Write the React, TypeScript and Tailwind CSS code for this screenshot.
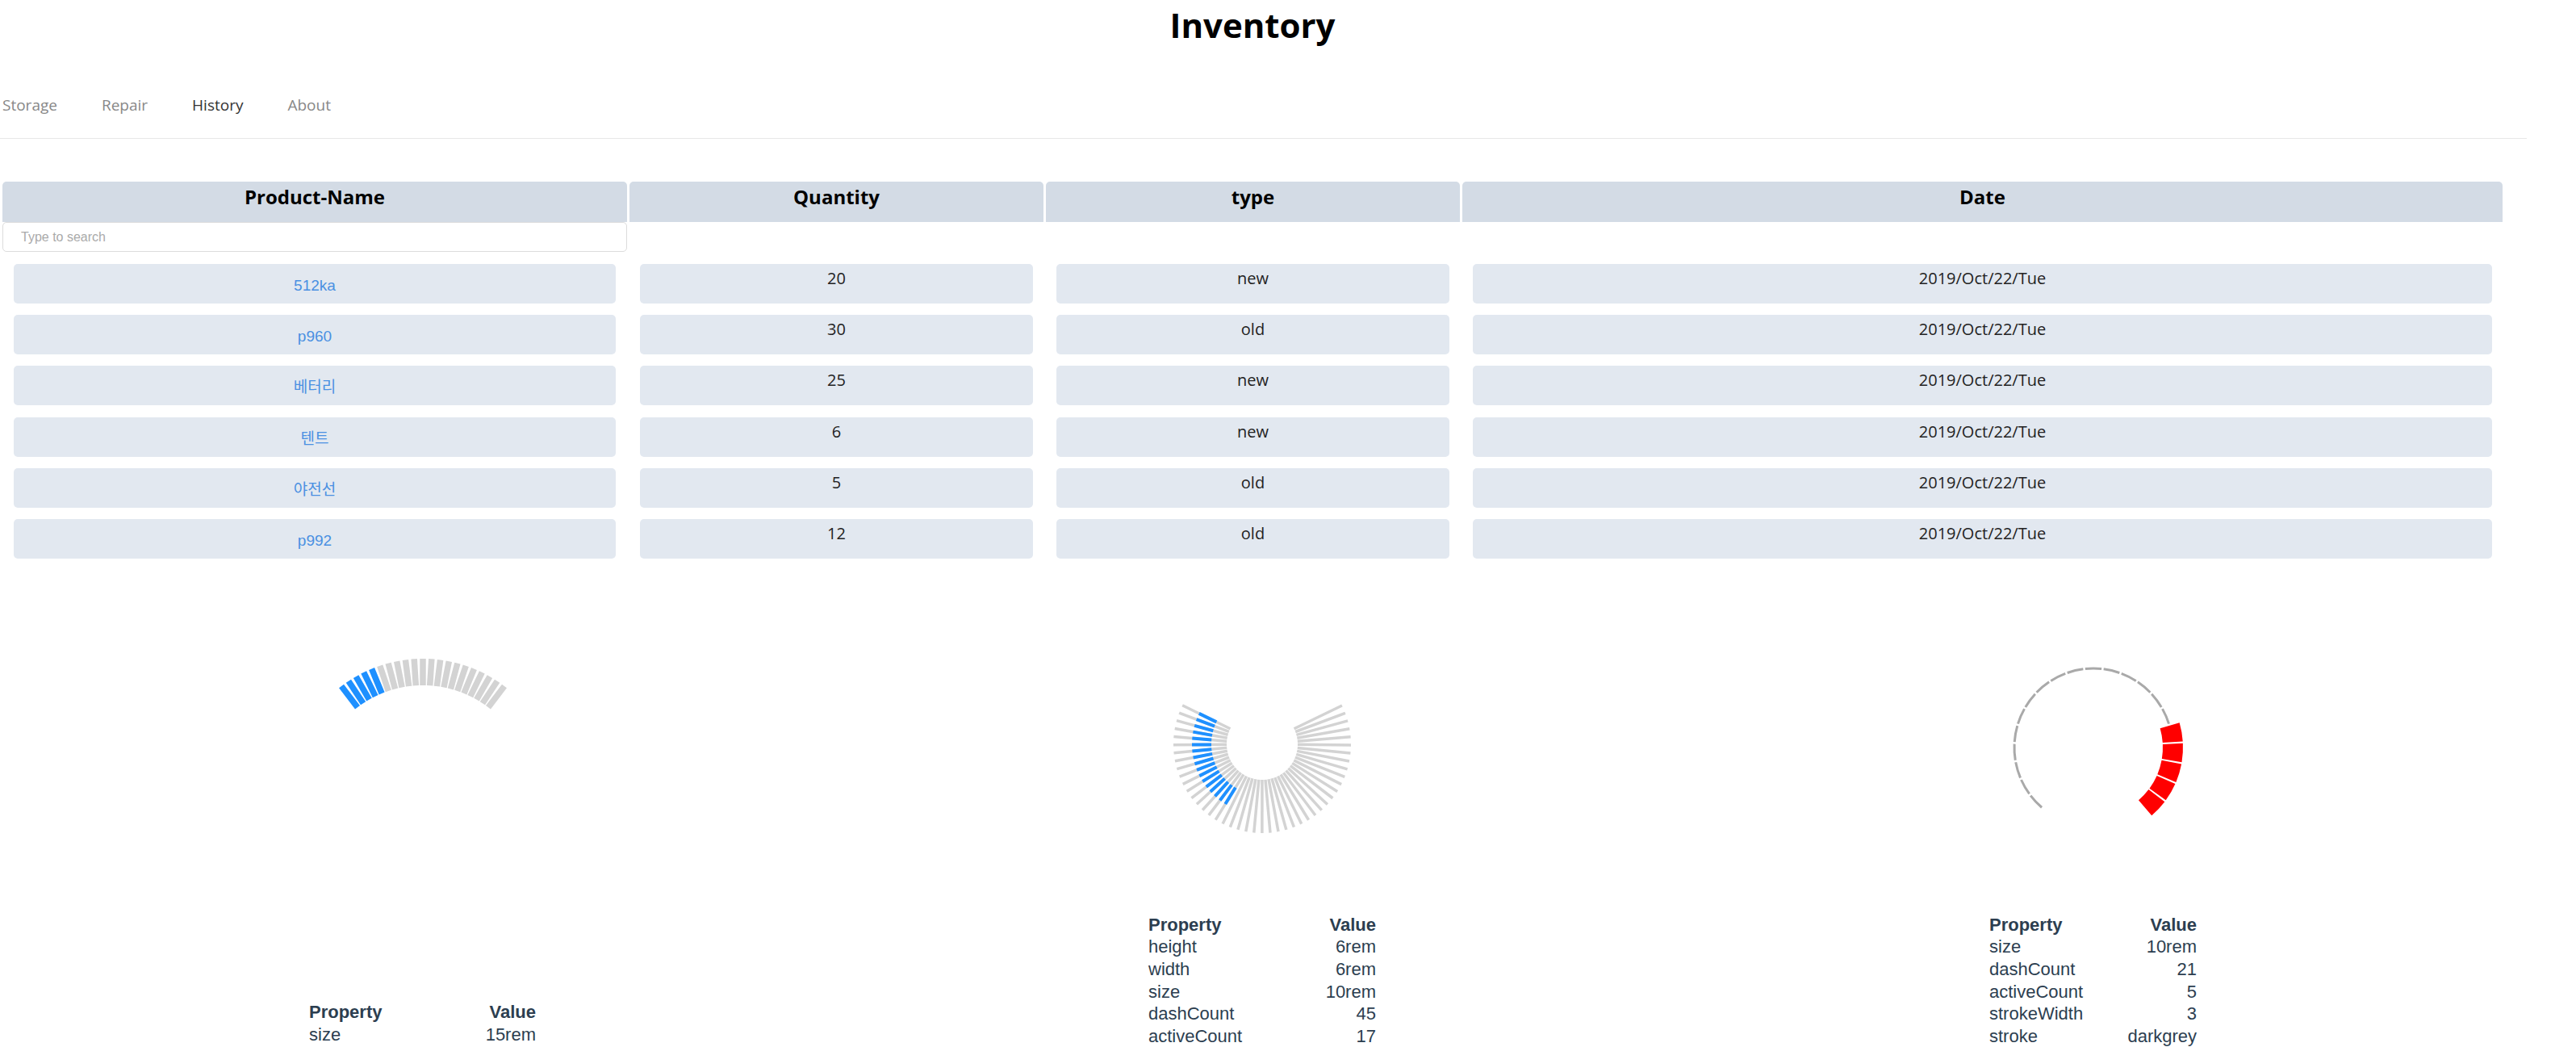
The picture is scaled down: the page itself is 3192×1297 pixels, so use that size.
import React from "react";

const rows = [
  { name: "512ka", qty: 20, type: "new", date: "2019/Oct/22/Tue" },
  { name: "p960", qty: 30, type: "old", date: "2019/Oct/22/Tue" },
  { name: "베터리", qty: 25, type: "new", date: "2019/Oct/22/Tue" },
  { name: "텐트", qty: 6, type: "new", date: "2019/Oct/22/Tue" },
  { name: "야전선", qty: 5, type: "old", date: "2019/Oct/22/Tue" },
  { name: "p992", qty: 12, type: "old", date: "2019/Oct/22/Tue" },
];

// angle in degrees, clockwise from 12 o'clock
const polar = (cx: number, cy: number, r: number, deg: number) => {
  const a = ((deg - 90) * Math.PI) / 180;
  return [cx + r * Math.cos(a), cy + r * Math.sin(a)];
};

const arc = (cx: number, cy: number, r: number, from: number, to: number) => {
  const [x1, y1] = polar(cx, cy, r, from);
  const [x2, y2] = polar(cx, cy, r, to);
  return `M ${x1} ${y1} A ${r} ${r} 0 0 1 ${x2} ${y2}`;
};

const GaugeOne = () => {
  const dashes = Array.from({ length: 21 }, (_, i) => -37.2 + i * 3.72);
  return (
    <svg width="360" height="360" viewBox="0 0 360 360">
      {dashes.map((d, i) => {
        const [x1, y1] = polar(180, 181, 134, d);
        const [x2, y2] = polar(180, 181, 167, d);
        return (
          <line
            key={i}
            x1={x1}
            y1={y1}
            x2={x2}
            y2={y2}
            stroke={i < 5 ? "#1e90ff" : "#d3d3d3"}
            strokeWidth="7.5"
          />
        );
      })}
    </svg>
  );
};

const GaugeTwo = () => {
  const dashes = Array.from({ length: 45 }, (_, i) => -64 - i * 5.27);
  return (
    <svg width="240" height="240" viewBox="0 0 240 240">
      {dashes.map((d, i) => {
        const [x1, y1] = polar(120, 120, 44, d);
        const [x2, y2] = polar(120, 120, 110, d);
        return <line key={i} x1={x1} y1={y1} x2={x2} y2={y2} stroke="#d3d3d3" strokeWidth="3.5" />;
      })}
      {dashes.slice(0, 17).map((d, i) => {
        const [x1, y1] = polar(120, 120, 63, d);
        const [x2, y2] = polar(120, 120, 87, d);
        return <line key={"b" + i} x1={x1} y1={y1} x2={x2} y2={y2} stroke="#1e90ff" strokeWidth="4" />;
      })}
    </svg>
  );
};

const GaugeThree = () => {
  const step = 280 / 21;
  const slots = Array.from({ length: 21 }, (_, i) => -140 + i * step);
  return (
    <svg width="240" height="240" viewBox="0 0 240 240">
      {slots.map((s, i) =>
        i < 16 ? (
          <path key={i} d={arc(120, 124, 98, s + 0.75, s + step - 0.75)} fill="none" stroke="#a9a9a9" strokeWidth="3" />
        ) : (
          <path key={i} d={arc(120, 124, 98.5, s + 0.6, s + step - 0.6)} fill="none" stroke="#ff0000" strokeWidth="25" />
        )
      )}
    </svg>
  );
};

const PropTable = ({ width, items }: { width: string; items: [string, string][] }) => {
  return (
    <div className={`${width} font-['Liberation_Sans',Arial,sans-serif] text-[22px] leading-[27.7px] text-[#2c3e50]`}>
      <div className="flex justify-between font-bold">
        <span>Property</span>
        <span>Value</span>
      </div>
      {items.map(([k, v]) => (
        <div key={k} className="flex justify-between">
          <span>{k}</span>
          <span>{v}</span>
        </div>
      ))}
    </div>
  );
};

const App = () => {
  return (
    <div className="w-[3192px] h-[1297px] overflow-hidden bg-white font-['Open_Sans',sans-serif]">
      <h1 className="w-[3104px] pt-[2px] text-center text-[42px] leading-[57px] font-bold text-black">Inventory</h1>

      <div className="w-[3131px] mt-[58px] pb-[28px] border-b border-[#e8e8e8]">
        <div className="flex gap-[55px] pl-[3px] text-[19px] leading-[26px]">
          <span className="text-[#888]">Storage</span>
          <span className="text-[#888]">Repair</span>
          <span className="text-[#333]">History</span>
          <span className="text-[#888]">About</span>
        </div>
      </div>

      <div className="mt-[53px] ml-[3px] grid grid-cols-[774px_513px_513px_1289px] gap-x-[3px]">
        {["Product-Name", "Quantity", "type", "Date"].map((h) => (
          <div key={h} className="h-[50px] pt-[2px] rounded-t-[5px] bg-[#d3dbe5] text-center text-[24px] leading-[33px] font-bold text-black">
            {h}
          </div>
        ))}
        <input
          placeholder="Type to search"
          className="h-[37px] pl-[22px] border border-[#dcdcdc] rounded-[5px] font-['Liberation_Sans',Arial,sans-serif] text-[16px] placeholder:text-[#aaa] outline-none"
        />
        <div />
        <div />
        <div />
      </div>

      <div className="mt-[15px] ml-[3px] grid grid-cols-[774px_513px_513px_1289px] gap-x-[3px] gap-y-[14.2px]">
        {rows.map((r) => (
          <React.Fragment key={r.name}>
            <div className="mx-[14px] h-[49px] pt-[16px] rounded-[5px] bg-[#e2e8f0] text-center font-['Liberation_Sans','Noto_Sans_CJK_KR',sans-serif] text-[19px] leading-[22px] text-[#4a90e2]">
              {r.name}
            </div>
            <div className="mx-[13px] h-[49px] pt-[4px] rounded-[5px] bg-[#e2e8f0] text-center text-[20px] leading-[27px] text-[#222]">
              {r.qty}
            </div>
            <div className="mx-[13px] h-[49px] pt-[4px] rounded-[5px] bg-[#e2e8f0] text-center text-[20px] leading-[27px] text-[#222]">
              {r.type}
            </div>
            <div className="mx-[13px] h-[49px] pt-[4px] rounded-[5px] bg-[#e2e8f0] text-center text-[20px] leading-[27px] text-[#222]">
              {r.date}
            </div>
          </React.Fragment>
        ))}
      </div>

      <div className="mt-[110px] grid grid-cols-[1047px_1034px_1025px]">
        <div className="flex flex-col items-center">
          <GaugeOne />
          <div className="mt-[78px]">
            <PropTable width="w-[281px]" items={[["size", "15rem"]]} />
          </div>
        </div>
        <div className="flex flex-col items-center">
          <GaugeTwo />
          <div className="mt-[89.6px]">
            <PropTable
              width="w-[282px]"
              items={[["height", "6rem"], ["width", "6rem"], ["size", "10rem"], ["dashCount", "45"], ["activeCount", "17"]]}
            />
          </div>
        </div>
        <div className="flex flex-col items-center">
          <GaugeThree />
          <div className="mt-[89.6px]">
            <PropTable
              width="w-[257px]"
              items={[["size", "10rem"], ["dashCount", "21"], ["activeCount", "5"], ["strokeWidth", "3"], ["stroke", "darkgrey"]]}
            />
          </div>
        </div>
      </div>
    </div>
  );
};

export default App;
